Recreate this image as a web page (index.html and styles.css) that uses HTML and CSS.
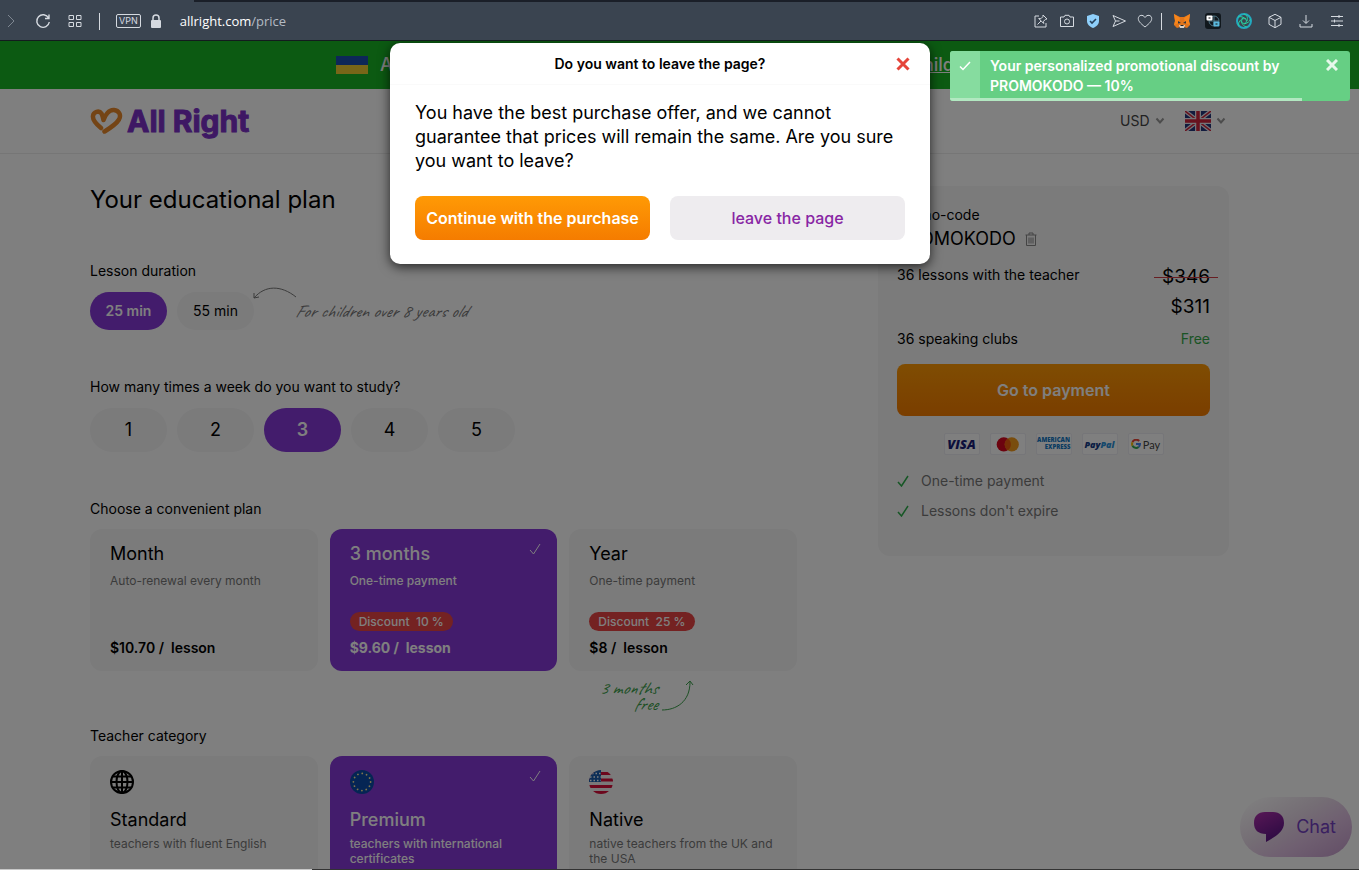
FILE: index.html
```html
<!DOCTYPE html>
<html lang="en">
<head>
    <meta charset="UTF-8">
    <meta name="viewport" content="width=device-width, initial-scale=1.0">
    <title>All Right - Price</title>
    <link rel="stylesheet" href="styles.css">
</head>
<body>

    <!-- Browser bar -->
    <div class="browser">
        <div class="browser-left">
            <button class="icon-btn dim" type="button" aria-label="Forward"><svg viewBox="0 0 16 16"><path d="M5 2l6 6-6 6"/></svg></button>
            <button class="icon-btn" type="button" aria-label="Reload"><svg viewBox="0 0 16 16"><path d="M13.6 5A6.3 6.3 0 1 0 14.3 9M14 1.500V5.500H10" stroke-width="1.400"/></svg></button>
            <button class="icon-btn" type="button" aria-label="Speed dial"><svg viewBox="0 0 16 16"><path d="M2 2.500h4.500v4H2zM9.500 2.500H14v4H9.500zM2 9.500h4.500v4H2zM9.500 9.500H14v4H9.500z"/></svg></button>
            <span class="divider"></span>
        </div>
        <div class="address">
            <span class="vpn">VPN</span>
            <svg class="lock" viewBox="0 0 12 14"><path d="M3 6V4a3 3 0 0 1 6 0v2" fill="none" stroke="#d5dae0" stroke-width="1.500"/><rect x="1" y="6" width="10" height="8" rx="1" fill="#d5dae0"/></svg>
            <a class="url" href="#">allright.com<span>/price</span></a>
        </div>
        <div class="browser-right">
            <button class="icon-btn" type="button" aria-label="Pin"><svg viewBox="0 0 16 16"><path d="M6 3H2v11h11v-4M10 2l4 4-1.500.3-2 2 .2 2.200-5-5 2.200.2 2-2zM8 8l-3.500 3.500"/></svg></button>
            <button class="icon-btn" type="button" aria-label="Snapshot"><svg viewBox="0 0 16 16"><path d="M1.500 4H5l1-1.700h4L11 4h3.500v9.500h-13z"/><circle cx="8" cy="8.500" r="2.500"/></svg></button>
            <button class="icon-btn" type="button" aria-label="Ad blocker"><svg viewBox="0 0 16 16"><path d="M8 1l6 2v5c0 3.500-2.500 5.500-6 7-3.500-1.500-6-3.500-6-7V3z" fill="#8fd0fb" stroke="none"/><path d="M5 8l2 2 4-4" stroke="#26425c" stroke-width="1.600"/></svg></button>
            <button class="icon-btn" type="button" aria-label="My Flow"><svg viewBox="0 0 16 16"><path d="M2 2.500L14.500 8 2 13.500 4.500 8zM4.500 8h4"/></svg></button>
            <button class="icon-btn" type="button" aria-label="Favourite"><svg viewBox="0 0 16 16"><path d="M8 14C3 10 1.300 8 1.300 5.500 1.300 2 6 1 8 4.500 10 1 14.700 2 14.700 5.500 14.700 8 13 10 8 14z"/></svg></button>
        </div>
        <span class="divider"></span>
        <div class="extensions">
            <button class="icon-btn" type="button" aria-label="Wallet"><svg viewBox="0 0 16 16"><path d="M0 1l6 3h4l6-3-1 7 1 4-3 3-3-1H6l-3 1-3-3 1-4z" fill="#e2761b" stroke="none"/><path d="M0 1l6 4-1 5-5 2 1-4zM16 1l-6 4 1 5 5 2-1-4z" fill="#f6851b" stroke="none"/><path d="M4 8l3 2-3 .5zM12 8l-3 2 3 .5z" fill="#2b3440" stroke="none"/><path d="M5 12h6l-1 3H6z" fill="#d9d0c4" stroke="none"/><path d="M6.500 12h3v1h-3z" fill="#222" stroke="none"/></svg></button>
            <button class="icon-btn" type="button" aria-label="Translator"><svg viewBox="0 0 16 16"><rect width="16" height="16" rx="3" fill="#11181d" stroke="none"/><circle cx="9" cy="8" r="5" stroke="#4c7180"/><path d="M4 8h10M9 3v10" stroke="#4c7180"/><rect x="1.500" y="2.500" width="6" height="5" rx="1" fill="#fff" stroke="none"/><rect x="8.500" y="8.500" width="6" height="5" rx="1" fill="#5ab8dd" stroke="none"/><path d="M3.500 5h2M10.500 11h2" stroke="#111"/></svg></button>
            <button class="icon-btn" type="button" aria-label="Privacy"><svg viewBox="0 0 16 16"><circle cx="8" cy="8" r="7" stroke="#23a8c0" stroke-width="2"/><circle cx="8" cy="8" r="2.500" stroke="#27c29a"/><path d="M8 1c3 1 4 3 3 7M14.500 6c-1 3-3 4-6.500 5M11 14c-3-.5-4.500-2-6-6M3 13c-1-3 0-5 4-8M2 4c3-1 5 0 8 2" stroke="#2ad3a0"/></svg></button>
            <button class="icon-btn" type="button" aria-label="Extensions"><svg viewBox="0 0 16 16"><path d="M8 1.300l6 3v7l-6 3.400-6-3.400v-7zM2 4.300l6 3.200 6-3.200M8 7.500v7"/></svg></button>
            <button class="icon-btn" type="button" aria-label="Downloads"><svg viewBox="0 0 16 16"><path d="M8 2v8M5 7.500l3 3 3-3M2 11v3h12v-3"/></svg></button>
            <button class="icon-btn" type="button" aria-label="Easy setup"><svg viewBox="0 0 16 16"><path d="M2 3.500h12M2 8h12M2 12.500h12M10 2v3M5.500 6.500v3M10 11v3"/></svg></button>
        </div>
    </div>

    <div class="page">
        <div class="banner">
            <div class="banner-inner">
                <span class="ua-flag"></span>
                <span>A</span>
                <a href="#">child</a>
            </div>
        </div>

        <header class="header">
            <a class="logo" href="#">
                <svg viewBox="0 0 34 28"><path d="M11 21C5 16 2.500 12.500 3 9 3.500 5 9 3 11.500 6.500c1 2 1.500 4 2 6.500C15 8 19 2.500 24 3c5 .5 7.500 5 5 9.500-3 5-8 8-14.500 12" fill="none" stroke="#e8882a" stroke-width="4.500" stroke-linecap="round" stroke-linejoin="round"/></svg>
                All Right
            </a>
            <div class="header-right">
                <select class="currency" aria-label="Currency">
                    <option>USD</option>
                </select>
                <svg class="chevron" viewBox="0 0 10 8"><path d="M1.500 1.500L5 5.500l3.500-4"/></svg>
                <button class="language" type="button" aria-label="Language">
                    <svg class="gb-flag" viewBox="0 0 26 20"><rect width="26" height="20" fill="#24367c"/><path d="M0 0l26 20M26 0L0 20" stroke="#e8e8f0" stroke-width="4"/><path d="M0 0l26 20M26 0L0 20" stroke="#d0243c" stroke-width="1.500"/><path d="M13 0v20M0 10h26" stroke="#e8e8f0" stroke-width="6"/><path d="M13 0v20M0 10h26" stroke="#d0243c" stroke-width="3.500"/></svg>
                    <svg class="chevron" viewBox="0 0 10 8"><path d="M1.500 1.500L5 5.500l3.500-4"/></svg>
                </button>
            </div>
        </header>

        <main class="main">
            <div class="plan">
                <h1>Your educational plan</h1>

                <fieldset class="group">
                    <legend>Lesson duration</legend>
                    <div class="pills">
                        <label class="pill"><input type="radio" name="duration" checked><span>25 min</span></label>
                        <label class="pill"><input type="radio" name="duration"><span>55 min</span></label>
                        <div class="note">
                            <svg viewBox="0 0 44 14"><path d="M1 11C12-2 28-2 43 10M1 6v5l5-1"/></svg>
                            <span>For children over 8 years old</span>
                        </div>
                    </div>
                </fieldset>

                <fieldset class="group">
                    <legend>How many times a week do you want to study?</legend>
                    <div class="pills pills-big">
                        <label class="pill"><input type="radio" name="times"><span>1</span></label>
                        <label class="pill"><input type="radio" name="times"><span>2</span></label>
                        <label class="pill"><input type="radio" name="times" checked><span>3</span></label>
                        <label class="pill"><input type="radio" name="times"><span>4</span></label>
                        <label class="pill"><input type="radio" name="times"><span>5</span></label>
                    </div>
                </fieldset>

                <fieldset class="group group-plans">
                    <legend>Choose a convenient plan</legend>
                    <div class="cards">
                        <label class="card">
                            <input type="radio" name="plan">
                            <span class="card-title">Month</span>
                            <span class="card-sub">Auto-renewal every month</span>
                            <span class="card-price">$10.70 /&nbsp; lesson</span>
                        </label>
                        <label class="card">
                            <input type="radio" name="plan" checked>
                            <span class="card-title">3 months</span>
                            <span class="card-sub">One-time payment</span>
                            <span class="discount">Discount&nbsp; 10 %</span>
                            <span class="card-price">$9.60 /&nbsp; lesson</span>
                            <svg class="tick" viewBox="0 0 12 12"><path d="M1 7l3.500 4L11 1"/></svg>
                        </label>
                        <label class="card">
                            <input type="radio" name="plan">
                            <span class="card-title">Year</span>
                            <span class="card-sub">One-time payment</span>
                            <span class="discount">Discount&nbsp; 25 %</span>
                            <span class="card-price">$8 /&nbsp; lesson</span>
                            <span class="free-note">
                                <span>3 months<br>free</span>
                                <svg viewBox="0 0 34 32"><path d="M1 30c14 0 28-8 28-28M25 5l4-4 3 4"/></svg>
                            </span>
                        </label>
                    </div>
                </fieldset>

                <fieldset class="group">
                    <legend>Teacher category</legend>
                    <div class="cards cards-teacher">
                        <label class="card">
                            <input type="radio" name="teacher">
                            <svg class="card-icon" viewBox="0 0 24 24" fill="none" stroke="#000" stroke-width="2"><circle cx="12" cy="12" r="11"/><ellipse cx="12" cy="12" rx="5.500" ry="11"/><path d="M12 1v22M1 12h22M3 6.500h18M3 17.500h18"/></svg>
                            <span class="card-title">Standard</span>
                            <span class="card-sub">teachers with fluent English</span>
                        </label>
                        <label class="card">
                            <input type="radio" name="teacher" checked>
                            <svg class="card-icon" viewBox="0 0 24 24"><circle cx="12" cy="12" r="12" fill="#0b4aa8"/><circle cx="12" cy="12" r="8.600" fill="none" stroke="#ffe99a" stroke-width="1.800" stroke-linecap="round" stroke-dasharray="0.010 4.493"/></svg>
                            <span class="card-title">Premium</span>
                            <span class="card-sub">teachers with international certificates</span>
                            <svg class="tick" viewBox="0 0 12 12"><path d="M1 7l3.500 4L11 1"/></svg>
                        </label>
                        <label class="card">
                            <input type="radio" name="teacher">
                            <svg class="card-icon" viewBox="0 0 24 24"><clipPath id="round"><circle cx="12" cy="12" r="12"/></clipPath><g clip-path="url(#round)"><path fill="#f4f0f2" d="M0 0h24v24H0z"/><path d="M0 3.500h24M0 10h24M0 16.500h24M0 22.500h24" stroke="#d80f3a" stroke-width="3"/><path fill="#1a5fae" d="M0 0h12v12H0z"/><path d="M3 3.500h9M1 7h11M1 10.500h11" stroke="#fff" stroke-width="1.500" stroke-dasharray="1.500 2"/></g></svg>
                            <span class="card-title">Native</span>
                            <span class="card-sub">native teachers from the UK and the USA</span>
                        </label>
                    </div>
                </fieldset>
            </div>

            <aside class="summary">
                <div>Promo-code</div>
                <div class="promo">
                    PROMOKODO
                    <button type="button" aria-label="Remove promo-code"><svg viewBox="0 0 12 14"><path d="M0.500 3h11M4 3V1h4v2M1.500 3v10.500h9V3M4 5.500v6M6 5.500v6M8 5.500v6"/></svg></button>
                </div>
                <div class="row row-lessons">
                    <span>36 lessons with the teacher</span>
                    <div class="prices">
                        <s>$346</s>
                        <span>$311</span>
                    </div>
                </div>
                <div class="row">
                    <span>36 speaking clubs</span>
                    <span class="free">Free</span>
                </div>
                <button class="btn-orange btn-pay" type="button">Go to payment</button>
                <div class="methods">
                    <span class="method visa">VISA</span>
                    <span class="method"><svg viewBox="0 0 36 22"><circle cx="13.500" cy="11" r="7.500" fill="#d8061f"/><circle cx="22" cy="11" r="7.500" fill="#f29b1d"/><path d="M17.750 4.800a7.500 7.500 0 0 1 0 12.400 7.500 7.500 0 0 1 0-12.400z" fill="#ee5b0c"/></svg></span>
                    <span class="method amex"><span>AMERICAN</span><span>EXPRESS</span></span>
                    <span class="method paypal">Pay<span>Pal</span></span>
                    <span class="method gpay"><svg viewBox="0 0 10 10"><path d="M8.200 2A4 4 0 0 0 1.500 3.200" stroke="#ea4335"/><path d="M1.500 3.200a4 4 0 0 0 0 3.600" stroke="#fbbc05"/><path d="M1.500 6.800A4 4 0 0 0 7.600 8" stroke="#34a853"/><path d="M7.600 8A4 4 0 0 0 9 5H5" stroke="#4285f4"/></svg>Pay</span>
                </div>
                <ul class="benefits">
                    <li><svg viewBox="0 0 12 12"><path d="M1 7l3.500 4L11 1"/></svg>One-time payment</li>
                    <li><svg viewBox="0 0 12 12"><path d="M1 7l3.500 4L11 1"/></svg>Lessons don't expire</li>
                </ul>
            </aside>
        </main>

        <button class="chat" type="button">
            <svg viewBox="0 0 30 30"><defs><linearGradient id="bubble" x1="0" y1="0" x2="0.500" y2="1"><stop offset="0" stop-color="#b030ac"/><stop offset="1" stop-color="#5e1688"/></linearGradient></defs><path d="M11 0h8c7 0 11 4 11 11 0 8-7 13-18 19v-8C4 22 0 18 0 11S4 0 11 0z" fill="url(#bubble)"/></svg>
            Chat
        </button>

        <div class="backdrop"></div>

        <div class="dialog" role="dialog" aria-labelledby="dialogTitle">
            <div class="dialog-head">
                <h2 id="dialogTitle">Do you want to leave the page?</h2>
                <button class="dialog-close" type="button" aria-label="Close"><svg viewBox="0 0 14 14"><path d="M1.500 1.500l11 11M12.500 1.500l-11 11"/></svg></button>
            </div>
            <p>You have the best purchase offer, and we cannot guarantee that prices will remain the same. Are you sure you want to leave?</p>
            <div class="dialog-actions">
                <button class="btn-orange" type="button">Continue with the purchase</button>
                <button class="btn-leave" type="button">leave the page</button>
            </div>
        </div>

        <div class="toast" role="status">
            <div class="toast-icon"><svg viewBox="0 0 12 10"><path d="M1 5.500l3 3L11 1"/></svg></div>
            <p>Your personalized promotional discount by PROMOKODO — 10%</p>
            <button type="button" aria-label="Close"><svg viewBox="0 0 12 12"><path d="M1 1l10 10M11 1L1 11"/></svg></button>
            <div class="toast-progress"></div>
        </div>

        <div class="status-line"></div>
    </div>

</body>
</html>
```

FILE: styles.css
```css
* {
    box-sizing: border-box;
}

body {
    margin: 0;
    height: 100vh;
    overflow: hidden;
    display: flex;
    flex-direction: column;
    font-family: Inter, "Liberation Sans", sans-serif;
    font-size: 14px;
    line-height: 20px;
    color: #000;
    background: #fff;
}

button {
    padding: 0;
    border: none;
    background: none;
    font: inherit;
    color: inherit;
    cursor: pointer;
}

svg {
    display: block;
    flex: none;
}

/* Browser bar */
.browser {
    flex: none;
    display: flex;
    align-items: center;
    height: 41px;
    padding: 2px 14px 0 3px;
    background: linear-gradient(90deg, #3a4450 194px, #1a1f28 194px) top / 100% 2px no-repeat, #3a4450;
    border-bottom: 1px solid #131c1e;
}

.browser-left {
    display: flex;
    align-items: center;
    gap: 16px;
}

.browser-right {
    display: flex;
    gap: 10px;
    margin-right: 8px;
}

.extensions {
    display: flex;
    gap: 15px;
    margin-left: 12px;
}

.icon-btn svg {
    width: 16px;
    height: 16px;
    fill: none;
    stroke: #d5dae0;
}

.dim svg {
    stroke: #7e8791;
}

.divider {
    width: 1px;
    height: 17px;
    background: #d5dae0;
}

.address {
    flex: 1;
    display: flex;
    align-items: center;
    margin-left: 16px;
}

.vpn {
    padding: 0 2px;
    border: 1px solid #d5dae0;
    border-radius: 2px;
    font-size: 9px;
    line-height: 12px;
    color: #d5dae0;
}

.lock {
    width: 12px;
    height: 14px;
    margin: 0 18px 0 9px;
}

.url {
    font-family: "Open Sans", sans-serif;
    font-size: 13px;
    color: #fff;
    text-decoration: none;
}

.url span {
    color: #b4bbc3;
}

/* Page */
.page {
    flex: 1;
    position: relative;
    overflow: hidden;
}

.banner {
    height: 48px;
    background: #18b424;
    color: #fff;
    font-size: 18px;
    font-weight: 500;
}

.banner-inner {
    display: flex;
    align-items: center;
    width: 618px;
    height: 100%;
    margin-left: 336px;
}

.ua-flag {
    width: 32px;
    height: 18px;
    margin-right: 12px;
    background: linear-gradient(#1b4fb0 50%, #f0cc30 50%);
}

.banner a {
    margin-left: auto;
    color: #fff;
}

.header {
    display: flex;
    align-items: center;
    justify-content: space-between;
    height: 65px;
    padding: 0 133px 0 90px;
    border-bottom: 1px solid #ececec;
}

.logo {
    display: flex;
    align-items: center;
    gap: 3px;
    font-size: 30px;
    font-weight: 700;
    line-height: 32px;
    color: #7c30c8;
    -webkit-text-stroke: 1px #7c30c8;
    stroke-linejoin: round;
    text-decoration: none;
}

.logo svg {
    width: 34px;
    height: 28px;
}

.header-right {
    display: flex;
    align-items: center;
}

.currency {
    appearance: none;
    padding: 0;
    border: none;
    background: none;
    font: inherit;
    color: #444;
}

.chevron {
    width: 10px;
    height: 8px;
    margin-left: 5px;
    fill: none;
    stroke: #999;
    stroke-width: 2;
}

.language {
    display: flex;
    align-items: center;
    margin-left: 20px;
}

.gb-flag {
    width: 26px;
    height: 20px;
}

.main {
    display: grid;
    grid-template-columns: 1fr 351px;
    gap: 81px;
    align-items: start;
    padding: 32px 130px 0 90px;
}

h1 {
    margin: 0 0 47px;
    font-size: 24px;
    font-weight: 400;
    line-height: 28px;
}

.group {
    min-width: 0;
    margin: 0 0 47px;
    padding: 0;
    border: none;
}

.group-plans {
    margin-bottom: 55px;
}

legend {
    padding: 0;
    margin-bottom: 10px;
}

.pills {
    display: flex;
    align-items: center;
    gap: 10px;
    padding-top: 1px;
}

.pill input,
.card input {
    position: absolute;
    opacity: 0;
}

.pill span {
    display: block;
    width: 77px;
    border-radius: 22px;
    background: #f6f6f7;
    line-height: 38px;
    text-align: center;
    cursor: pointer;
}

.pills-big .pill span {
    font-size: 18px;
    line-height: 44px;
}

.pill input:checked + span {
    background: #8638d8;
    color: #fff;
    font-weight: 600;
}

.note {
    position: relative;
    padding-left: 31px;
    font-family: Caveat, cursive;
    font-size: 18px;
    font-style: italic;
    color: #777;
}

.note svg {
    position: absolute;
    left: -11px;
    top: -14px;
    width: 44px;
    height: 14px;
    fill: none;
    stroke: #777;
}

.cards {
    display: grid;
    grid-template-columns: repeat(3, 1fr);
    gap: 12px;
}

.card {
    position: relative;
    display: flex;
    flex-direction: column;
    align-items: flex-start;
    min-height: 142px;
    padding: 13px 20px;
    border-radius: 12px;
    background: #f6f6f7;
    cursor: pointer;
}

.card:has(input:checked) {
    background: #8638d8;
    color: #fff;
    font-weight: 500;
}

.card-title {
    font-size: 18px;
    line-height: 24px;
}

.card-sub {
    margin-top: 7px;
    font-size: 12px;
    line-height: 15px;
    color: #777;
}

.card:has(input:checked) .card-sub {
    color: #fff;
}

.discount {
    margin-top: 24px;
    padding: 0 9px;
    border-radius: 10px;
    background: #e84444;
    color: #fff;
    font-size: 12px;
    font-weight: 500;
    line-height: 19px;
}

.card-price {
    margin-top: auto;
    font-weight: 600;
}

.card:has(input:checked) .card-price {
    font-weight: 700;
}

.tick {
    position: absolute;
    top: 14px;
    right: 16px;
    width: 12px;
    height: 12px;
    fill: none;
    stroke: #fff;
}

.free-note {
    position: absolute;
    top: 151px;
    left: 30px;
    display: flex;
    align-items: flex-start;
    gap: 4px;
    font-family: Caveat, cursive;
    font-size: 18px;
    font-style: italic;
    font-weight: 400;
    line-height: 16px;
    text-align: right;
    white-space: nowrap;
    color: #3aa04a;
}

.free-note svg {
    width: 34px;
    height: 32px;
    fill: none;
    stroke: #3aa04a;
}

.cards-teacher .card {
    padding-top: 14px;
}

.card-icon {
    width: 24px;
    height: 24px;
    margin-bottom: 14px;
}

.cards-teacher .card-sub {
    margin-top: 4px;
}

/* Order summary */
.summary {
    padding: 19px 19px 30px;
    border-radius: 12px;
    background: #f6f6f7;
}

.promo {
    display: flex;
    align-items: center;
    gap: 9px;
    margin-top: 2px;
    font-size: 18px;
    line-height: 24px;
}

.promo svg {
    width: 12px;
    height: 14px;
    fill: none;
    stroke: #888;
}

.row {
    display: flex;
    justify-content: space-between;
    align-items: flex-start;
}

.row-lessons {
    margin: 11px 0 7px;
}

.row-lessons > span {
    padding-top: 3px;
}

.prices {
    display: flex;
    flex-direction: column;
    align-items: flex-end;
    font-size: 19px;
    line-height: 30px;
}

.prices s {
    position: relative;
    text-decoration: none;
}

.prices s::after {
    content: "";
    position: absolute;
    left: -8px;
    right: -8px;
    top: 15px;
    height: 1px;
    background: #d03c44;
}

.free {
    color: #34a848;
}

.btn-orange {
    border-radius: 8px;
    background: linear-gradient(#ff9a05, #f57c00);
    color: #fff;
    font-size: 16px;
    font-weight: 600;
}

.btn-pay {
    width: 100%;
    height: 52px;
    margin: 15px 0 17px;
}

.methods {
    display: flex;
    justify-content: center;
    gap: 10px;
    margin-bottom: 11px;
}

.method {
    display: flex;
    align-items: center;
    justify-content: center;
    width: 36px;
    height: 22px;
    border: 1px solid #ececf2;
    border-radius: 2px;
    background: #fff;
    font-family: "Open Sans", sans-serif;
    font-weight: 800;
    line-height: 7px;
}

.visa {
    font-size: 13px;
    font-style: italic;
    color: #1a1f78;
}

.amex {
    flex-direction: column;
    font-size: 6px;
    color: #1478c4;
}

.amex span:last-child {
    align-self: flex-end;
}

.paypal {
    font-size: 9px;
    font-style: italic;
    color: #143a86;
}

.paypal span {
    color: #2a90d8;
}

.gpay {
    gap: 2px;
    font-family: Lato, sans-serif;
    font-size: 11px;
    font-weight: 400;
    color: #444;
}

.gpay svg {
    width: 10px;
    height: 10px;
    fill: none;
    stroke-width: 2;
}

.benefits {
    margin: 0;
    padding: 0;
    list-style: none;
    line-height: 30px;
    color: #777;
}

.benefits li {
    display: flex;
    align-items: center;
    gap: 12px;
}

.benefits svg {
    width: 12px;
    height: 12px;
    fill: none;
    stroke: #2cae4a;
    stroke-width: 1.500;
}

.chat {
    position: absolute;
    right: 7px;
    bottom: 13px;
    display: flex;
    align-items: center;
    gap: 12px;
    height: 60px;
    padding: 0 16px 0 14px;
    border-radius: 30px;
    background: linear-gradient(150deg, #fff 5%, #eadcea 40%, #dfbfe2 65%, #c49acb);
    font-size: 18px;
    color: #7440c0;
}

.chat svg {
    width: 30px;
    height: 30px;
}

.backdrop {
    position: absolute;
    inset: 0;
    background: rgba(0, 0, 0, 0.5);
}

/* Leave dialog */
.dialog {
    position: absolute;
    top: 2px;
    left: 390px;
    width: 540px;
    padding-bottom: 24px;
    border-radius: 10px;
    background: #fff;
    box-shadow: 0 3px 12px rgba(0, 0, 0, 0.7);
}

.dialog-head {
    display: flex;
    align-items: center;
    height: 42px;
    padding: 0 20px 0 34px;
    border-bottom: 1px solid #fafafa;
}

.dialog h2 {
    flex: 1;
    margin: 0;
    font-size: 14px;
    font-weight: 600;
    text-align: center;
}

.dialog-close svg {
    width: 14px;
    height: 14px;
    fill: none;
    stroke: #e5453a;
    stroke-width: 3;
}

.dialog p {
    margin: 16px 25px 23px;
    font-size: 18px;
    line-height: 24px;
}

.dialog-actions {
    display: grid;
    grid-template-columns: 1fr 1fr;
    gap: 20px;
    padding: 0 25px;
}

.dialog-actions button {
    height: 44px;
}

.btn-leave {
    border-radius: 8px;
    background: #eeecef;
    color: #8826a4;
    font-size: 16px;
    font-weight: 500;
}

/* Promo toast */
.toast {
    position: absolute;
    top: 10px;
    right: 9px;
    display: flex;
    width: 400px;
    height: 50px;
    border-radius: 3px;
    overflow: hidden;
    background: #66cf84;
    color: #fff;
}

.toast-icon {
    width: 30px;
    padding: 10px 9px;
    background: #86dc9f;
}

.toast-icon svg {
    width: 12px;
    height: 10px;
    fill: none;
    stroke: #fff;
    stroke-width: 1.500;
}

.toast p {
    flex: 1;
    margin: 5px 40px 0 10px;
    font-weight: 600;
}

.toast button {
    align-self: flex-start;
    margin: 8px 12px 0 0;
}

.toast button svg {
    width: 12px;
    height: 12px;
    stroke: #e6f8eb;
    stroke-width: 3;
}

.toast-progress {
    position: absolute;
    left: 0;
    bottom: 0;
    width: 88%;
    height: 3px;
    background: #b2e8c1;
}

.status-line {
    position: absolute;
    left: 0;
    right: 0;
    bottom: 0;
    height: 1px;
    background: linear-gradient(90deg, #c8c8c8 312px, #333 312px);
}
```
